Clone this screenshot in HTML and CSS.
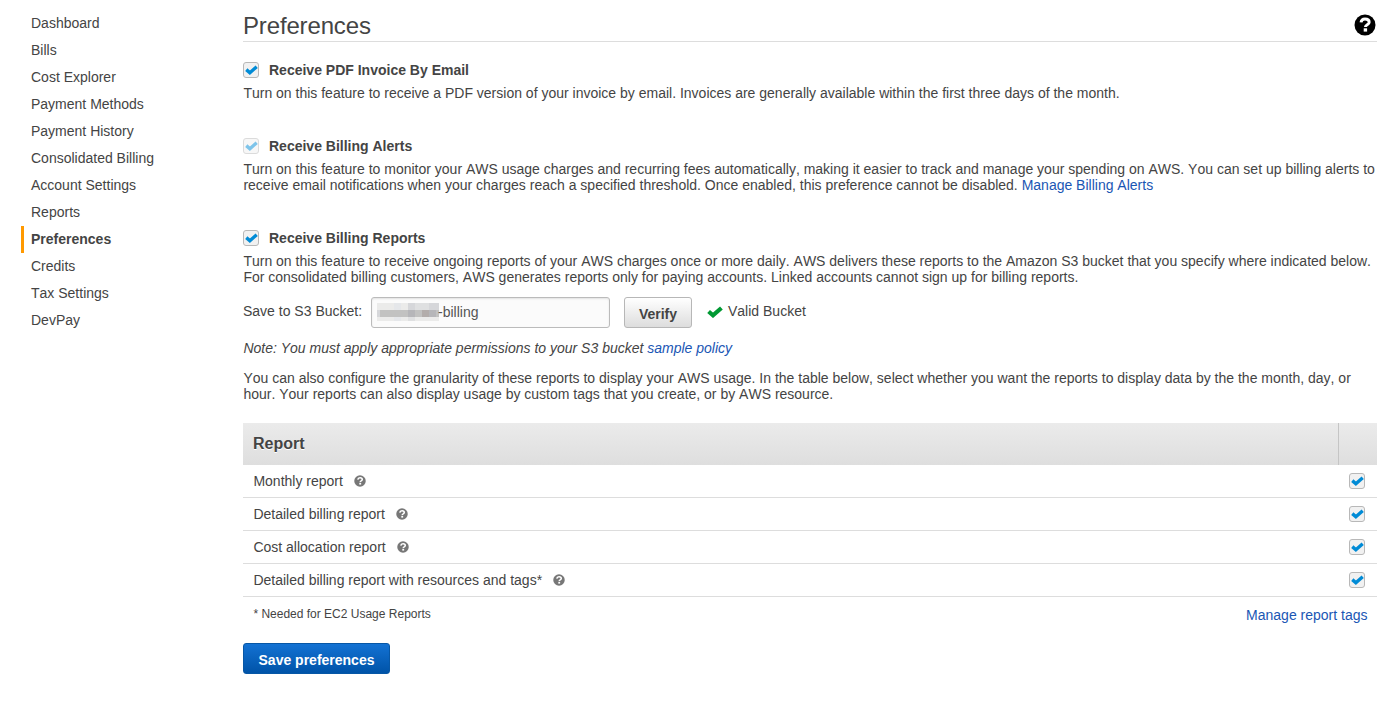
FILE: index.html
```html
<!DOCTYPE html>
<html lang="en">
<head>
<meta charset="utf-8">
<title>Preferences</title>
<link rel="stylesheet" href="styles.css">
</head>
<body>
<svg class="defs" aria-hidden="true">
  <symbol id="tick" viewBox="0 0 16 12"><path d="M1.600 5.500 6 9.300 14.400 2" fill="none" stroke="currentColor" stroke-width="4.200"/></symbol>
  <symbol id="help" viewBox="0 0 22 22"><circle cx="11" cy="11" r="10.5" fill="currentColor"/><path d="M7 8.400C7.300 6 8.700 5 11 5c2.600 0 4.200 1.200 4.200 3.200 0 2.600-3.800 2.400-3.800 4.800" fill="none" stroke="#fff" stroke-width="2.900"/><path d="M9.700 14.300h3.400v3.300H9.700z" fill="#fff"/></symbol>
</svg>
<div class="page">
  <nav class="sidebar">
    <a class="nav-item">Dashboard</a>
    <a class="nav-item">Bills</a>
    <a class="nav-item">Cost Explorer</a>
    <a class="nav-item">Payment Methods</a>
    <a class="nav-item">Payment History</a>
    <a class="nav-item">Consolidated Billing</a>
    <a class="nav-item">Account Settings</a>
    <a class="nav-item">Reports</a>
    <a class="nav-item active">Preferences</a>
    <a class="nav-item">Credits</a>
    <a class="nav-item">Tax Settings</a>
    <a class="nav-item">DevPay</a>
  </nav>
  <main class="content">
    <header class="title-bar">
      <h1>Preferences</h1>
      <svg class="help-big"><use href="#help"/></svg>
    </header>

    <section class="pref pdf">
      <h2><span class="check"><svg><use href="#tick"/></svg></span>Receive PDF Invoice By Email</h2>
      <p>Turn on this feature to receive a PDF version of your invoice by email. Invoices are generally available within the first three days of the month.</p>
    </section>

    <section class="pref alerts">
      <h2><span class="check disabled"><svg><use href="#tick"/></svg></span>Receive Billing Alerts</h2>
      <p>Turn on this feature to monitor your AWS usage charges and recurring fees automatically, making it easier to track and manage your spending on AWS. You can set up billing alerts to<br>receive email notifications when your charges reach a specified threshold. Once enabled, this preference cannot be disabled. <a>Manage Billing Alerts</a></p>
    </section>

    <section class="pref reports">
      <h2><span class="check"><svg><use href="#tick"/></svg></span>Receive Billing Reports</h2>
      <p>Turn on this feature to receive ongoing reports of your AWS charges once or more daily. AWS delivers these reports to the Amazon S3 bucket that you specify where indicated below.<br>For consolidated billing customers, AWS generates reports only for paying accounts. Linked accounts cannot sign up for billing reports.</p>
      <div class="bucket">
        <label>Save to S3 Bucket:</label>
        <div class="field"><span class="mosaic"><i></i><i></i><i></i><i class="cool-light"></i><i></i><i class="mid"></i><i class="mid-light"></i><i class="mid-light"></i><i class="mid"></i><i class="mid"></i><i class="mid"></i><i class="dark"></i><i class="dark"></i><i class="dark"></i><i class="dark"></i><i class="darker"></i><i class="dark"></i><i class="darkest"></i><i class="darker"></i><i class="dark"></i><i></i><i></i><i></i><i class="cool-light"></i><i></i><i class="mid-light"></i><i></i><i></i><i></i><i></i></span><span class="value">-billing</span></div>
        <button class="verify">Verify</button>
        <svg class="valid-icon"><use href="#tick"/></svg>
        <span class="valid">Valid Bucket</span>
      </div>
      <p class="note">Note: You must apply appropriate permissions to your S3 bucket <a>sample policy</a></p>
      <p class="granularity">You can also configure the granularity of these reports to display your AWS usage. In the table below, select whether you want the reports to display data by the the month, day, or<br>hour. Your reports can also display usage by custom tags that you create, or by AWS resource.</p>
    </section>

    <div class="table">
      <div class="thead"><span>Report</span><span class="corner"></span></div>
      <div class="row"><span>Monthly report</span><svg class="help"><use href="#help"/></svg><span class="check"><svg><use href="#tick"/></svg></span></div>
      <div class="row"><span>Detailed billing report</span><svg class="help"><use href="#help"/></svg><span class="check"><svg><use href="#tick"/></svg></span></div>
      <div class="row"><span>Cost allocation report</span><svg class="help"><use href="#help"/></svg><span class="check"><svg><use href="#tick"/></svg></span></div>
      <div class="row"><span>Detailed billing report with resources and tags*</span><svg class="help"><use href="#help"/></svg><span class="check"><svg><use href="#tick"/></svg></span></div>
    </div>
    <div class="footnote"><small>* Needed for EC2 Usage Reports</small><a>Manage report tags</a></div>
    <button class="save">Save preferences</button>
  </main>
</div>
</body>
</html>
```
FILE: styles.css
```css
* { box-sizing: border-box; }
body { margin: 0; background: #fff; color: #444; font: 14px/16px "Liberation Sans", Arial, sans-serif; font-kerning: none; }
h1, h2, p { margin: 0; }
a { color: #1a56b4; }
.defs { position: absolute; width: 0; height: 0; }
.page { display: flex; height: 719px; overflow: hidden; }

.sidebar { width: 243px; padding: 10px 0 0 21px; flex: none; }
.nav-item { display: block; height: 27px; line-height: 26px; padding-left: 7px; border-left: 3px solid transparent; color: #444; }
.nav-item.active { border-left-color: #f90; font-weight: bold; }

.content { width: 1134px; flex: none; white-space: nowrap; }
.title-bar { display: flex; justify-content: space-between; height: 42px; border-bottom: 1px solid #ddd; }
h1 { font-size: 24px; line-height: 28px; font-weight: normal; padding-top: 12px; letter-spacing: -.15px; }
.help-big { width: 22px; height: 22px; margin: 14px 1px 0 0; color: #000; }

.pref h2 { display: flex; align-items: center; height: 16px; gap: 10px; font-size: 14px; line-height: 16px; margin-bottom: 7px; }
.pref p { padding-left: .4px; }
.pdf { padding-top: 20px; height: 96px; }
.alerts { height: 92px; }
.reports { height: 193px; }

.check { display: flex; justify-content: center; width: 16px; height: 16px; flex: none; border: 1px solid #b8b8b8; border-radius: 3px; background: #f1f1f1; color: #008bd6; }
.check svg { width: 13px; height: 10px; margin-top: 2px; flex: none; }
.check.disabled { opacity: .5; }

.bucket { display: flex; align-items: flex-start; height: 31px; margin-top: 12px; }
.bucket label { width: 128px; padding-top: 6px; }
.field { display: flex; align-items: flex-start; width: 239px; height: 31px; padding: 5px 0 0 5px; border: 1px solid #bbb; border-radius: 3px; background: #fbfbfb; box-shadow: inset 0 1px 2px rgba(0,0,0,.1); color: #555; }
.value { margin: 1px 0 0 -1px; }
.mosaic { display: grid; grid-template: 7px 7px 4px / 3px repeat(8, 7px) 3px; }
.mosaic i { background: #ebebea; }
.mosaic .cool-light { background: #e5e7ea; }
.mosaic .mid { background: #d6d7da; }
.mosaic .mid-light { background: #dfe0e1; }
.mosaic .dark { background: #c2c2c1; }
.mosaic .darker { background: #b6b6b9; }
.mosaic .darkest { background: #b3adab; }
button { font: bold 14px/16px "Liberation Sans", Arial, sans-serif; height: 31px; padding: 3px 0 0; border-radius: 3px; }
.verify { width: 68px; margin-left: 14px; border: 1px solid #b7b7b7; background: linear-gradient(#fff, #ddd); color: #444; }
.valid-icon { width: 16px; height: 12px; margin: 9px 5px 0 15px; color: #093; }
.valid { padding-top: 6px; }
.note { margin-top: 12px; font-style: italic; }
.granularity { margin-top: 14px; }

.thead { display: flex; justify-content: space-between; height: 42px; padding-left: 10px; font-size: 16px; line-height: 41px; font-weight: bold; background: linear-gradient(#ebebeb, #dedede); text-shadow: 0 1px 0 #fff; }
.corner { width: 39px; border-left: 1px solid #c5c5c5; }
.row { display: flex; align-items: center; height: 33px; padding: 0 12px 0 10.400px; border-bottom: 1px solid #ddd; }
.row .help { width: 12px; height: 12px; margin-left: 11px; color: #777; }
.row .check { margin-left: auto; }
.footnote { display: flex; justify-content: space-between; height: 46px; padding: 10px 9.500px 0 10.400px; }
.footnote small { font-size: 12px; line-height: 14px; }
.save { display: block; width: 147px; border: 1px solid #0757a6; background: linear-gradient(#1372d3, #0053a8); color: #fff; }
```
